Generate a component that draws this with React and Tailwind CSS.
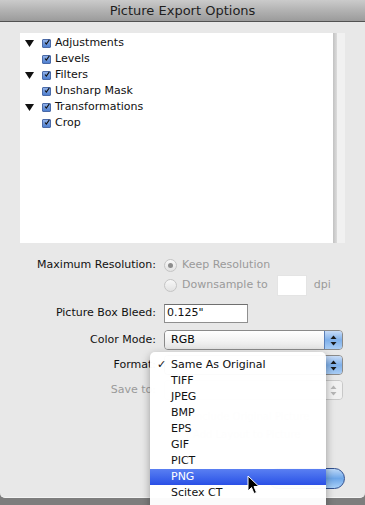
import React from 'react';

const tree = [
  { label: 'Adjustments', parent: true },
  { label: 'Levels' },
  { label: 'Filters', parent: true },
  { label: 'Unsharp Mask' },
  { label: 'Transformations', parent: true },
  { label: 'Crop' },
];

const formats = ['Same As Original', 'TIFF', 'JPEG', 'BMP', 'EPS', 'GIF', 'PICT', 'PNG', 'Scitex CT'];

const CheckBox = () => (
  <span className="w-[9px] h-[9px] rounded-[1px] border border-[#4a6aa8] bg-gradient-to-b from-[#8fb0e8] to-[#4e7fcf] flex items-center justify-center">
    <svg width="9" height="9" viewBox="0 0 9 9" className="-mt-[2px] ml-[1px]">
      <path d="M1.5 4.5 L3.5 7 L8 0.5" fill="none" stroke="#111" strokeWidth="1.6" />
    </svg>
  </span>
);

const Arrows = ({ disabled }) => (
  <svg width="7" height="11" viewBox="0 0 7 11">
    <path d="M3.5 0.5 L6.5 4 L0.5 4 Z" fill={disabled ? '#b5b5b5' : '#1a1a1a'} />
    <path d="M3.5 10.5 L6.5 7 L0.5 7 Z" fill={disabled ? '#b5b5b5' : '#1a1a1a'} />
  </svg>
);

const PopUp = ({ value, disabled }) => (
  <div
    className={`w-[179px] h-[20px] flex rounded-[4px] border overflow-hidden ${
      disabled ? 'border-[#c8c8c8]' : 'border-[#8a8a8a]'
    }`}
  >
    <div
      className={`flex-1 flex items-center pl-[6px] ${
        disabled ? 'bg-[#f1f1f1]' : 'bg-gradient-to-b from-[#ffffff] via-[#f4f4f4] to-[#e4e4e4]'
      }`}
    >
      {value}
    </div>
    <div
      className={`w-[18px] flex items-center justify-center border-l ${
        disabled
          ? 'bg-[#f1f1f1] border-[#d0d0d0]'
          : 'bg-gradient-to-b from-[#c8dcf7] via-[#7fb0ea] to-[#a9cdf5] border-[#5a7fb8]'
      }`}
    >
      <Arrows disabled={disabled} />
    </div>
  </div>
);

const Row = ({ label, muted, children, className = '' }) => (
  <div className={`flex items-center ${className}`}>
    <div className={`w-[157px] text-right pr-[1px] ${muted ? 'text-[#9a9a9a]' : 'text-[#111]'}`}>{label}</div>
    <div className="ml-[7px] flex items-center">{children}</div>
  </div>
);

const Radio = ({ on }) => (
  <span className="w-[13px] h-[13px] rounded-full border border-[#c4c4c4] bg-gradient-to-b from-[#f8f8f8] to-[#e2e2e2] flex items-center justify-center">
    {on && <span className="w-[5px] h-[5px] rounded-full bg-[#8c8c8c]" />}
  </span>
);

export default function App() {
  return (
    <div className="relative w-[365px] h-[505px] overflow-hidden bg-[#7d7d7d] text-[11px] font-['Lucida_Grande','DejaVu_Sans',sans-serif]">
      <div className="h-[498px] bg-[#e8e8e8] rounded-b-[5px] border-b border-[#f4f4f4] flex flex-col">
        <div className="h-[22px] shrink-0 bg-gradient-to-b from-[#cbcbcb] via-[#b2b2b2] to-[#9b9b9b] border-b border-[#525252] flex items-center justify-center text-[13px] text-[#1e1e1e]">
          Picture Export Options
        </div>

        <div className="mt-[11px] ml-[20px] flex h-[210px]">
          <div className="w-[313px] bg-white pt-[2px] pl-[5px]">
            {tree.map((t) => (
              <div key={t.label} className="h-[16px] flex items-center">
                <span className="w-[16px] flex justify-start">
                  {t.parent && (
                    <svg width="9" height="7" viewBox="0 0 9 7">
                      <path d="M0 0 L9 0 L4.5 7 Z" fill="#111" />
                    </svg>
                  )}
                </span>
                <span className="ml-[1px]">
                  <CheckBox />
                </span>
                <span className="ml-[4px] text-[#111]">{t.label}</span>
              </div>
            ))}
          </div>
          <div className="w-[4px] bg-gradient-to-r from-[#c2c2c2] to-[#dcdcdc]" />
          <div className="w-[8px] bg-[#f1f1f1]" />
        </div>

        <div className="mt-[12px] flex flex-col">
          <Row label="Maximum Resolution:" className="h-[20px]">
            <Radio on />
            <span className="ml-[5px] text-[#9a9a9a]">Keep Resolution</span>
          </Row>
          <Row label="" className="h-[21px]">
            <Radio />
            <span className="ml-[5px] text-[#9a9a9a]">Downsample to</span>
            <span className="ml-[9px] w-[30px] h-[21px] bg-white border border-[#e4e4e4]" />
            <span className="ml-[7px] text-[#9a9a9a]">dpi</span>
          </Row>
          <Row label="Picture Box Bleed:" className="h-[19px] mt-[8px]">
            <span className="w-[84px] h-[19px] bg-white border border-[#8f8f8f] border-t-[#6f6f6f] pl-[2px] flex items-center text-[#111]">
              0.125"
            </span>
          </Row>
          <Row label="Color Mode:" className="h-[20px] mt-[7px]">
            <PopUp value="RGB" />
          </Row>
          <Row label="Format:" className="h-[20px] mt-[5px]">
            <PopUp value="Same As Original" />
          </Row>
          <Row label="Save to:" muted className="h-[20px] mt-[5px]">
            <PopUp value="" disabled />
          </Row>
          <div className="mt-[9px] ml-[176px] flex flex-col gap-[4px] text-[10px] text-[#c4c4c4]">
            <div className="flex items-center h-[14px]">
              <span className="w-[12px] h-[12px] border border-[#dadada] bg-[#f4f4f4] rounded-[2px]" />
              <span className="ml-[5px]">Include Original Picture</span>
            </div>
            <div className="flex items-center h-[14px]">
              <span className="w-[12px] h-[12px] border border-[#dadada] bg-[#f4f4f4] rounded-[2px]" />
              <span className="ml-[5px]">Add Layout to Picture</span>
            </div>
          </div>
          <div className="mt-[27px] ml-[268px] w-[77px] h-[21px] rounded-full border border-[#2f4f8f] bg-gradient-to-b from-[#bcd8f8] via-[#6da6e8] to-[#a8d0f8]" />
        </div>
      </div>

      <div className="absolute left-[150px] top-[352px] w-[176px] h-[160px] rounded-[5px] bg-white/[0.97] shadow-[0_3px_8px_rgba(0,0,0,0.35)] pt-[5px] text-[11px] text-[#111]">
        {formats.map((f, i) => (
          <div
            key={f}
            className={`h-[16px] flex items-center ${
              f === 'PNG' ? 'bg-gradient-to-b from-[#5a7ff2] to-[#2a4fe6] text-white' : ''
            }`}
          >
            <span className="w-[21px] pl-[7px]">{i === 0 ? '✓' : ''}</span>
            <span>{f}</span>
          </div>
        ))}
      </div>

      <svg className="absolute left-[247px] top-[475px]" width="14" height="20" viewBox="0 0 14 20">
        <path d="M1 1 L1 16 L4.5 12.5 L7 18.5 L9.5 17.5 L7 11.5 L12 11.5 Z" fill="#000" stroke="#fff" strokeWidth="1" />
      </svg>
    </div>
  );
}
